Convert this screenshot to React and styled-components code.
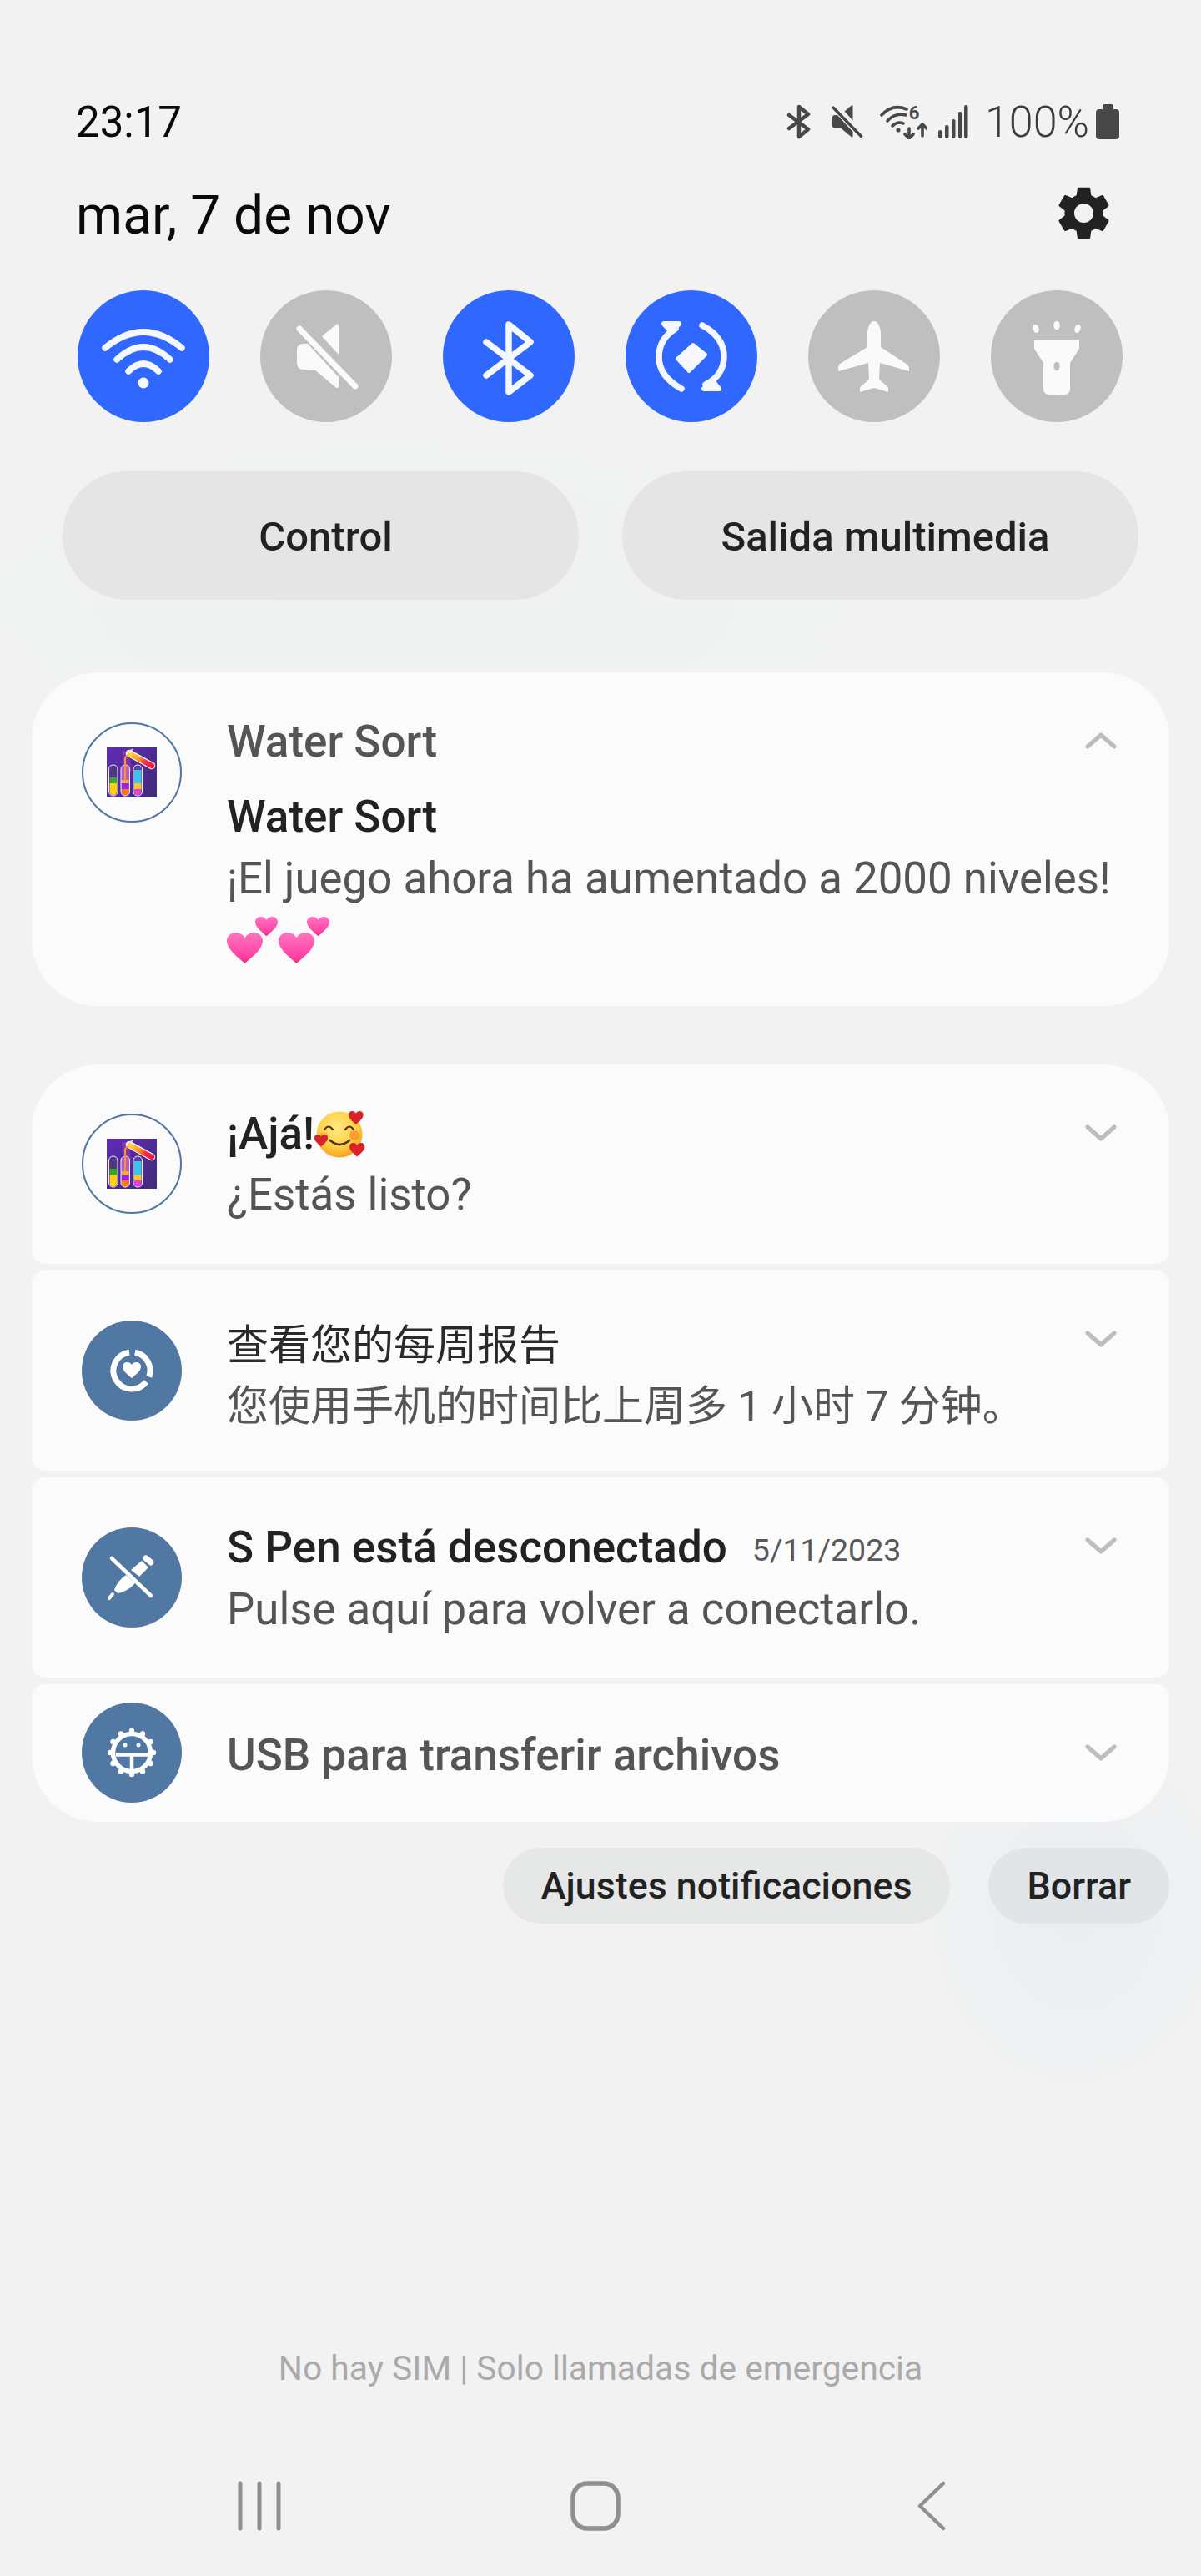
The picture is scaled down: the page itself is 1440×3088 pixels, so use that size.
import React from 'react';
import styled, { createGlobalStyle } from 'styled-components';

const Global = createGlobalStyle`
  html, body { margin: 0; padding: 0; }
  body {
    background: #f2f2f2;
    font-family: Roboto, "Noto Sans CJK SC", sans-serif;
  }
`;

const Page = styled.div`
  width: 1440px;
  height: 3088px;
  overflow: hidden;
  background:
    radial-gradient(ellipse 200px 240px at 1290px 2290px, #e9eef2 0%, rgba(233,238,242,0) 100%),
    radial-gradient(ellipse 800px 300px at 500px 720px, #eff1f1 0%, rgba(239,241,241,0) 100%),
    #f2f2f2;
  display: flex;
  flex-direction: column;
`;

const StatusBar = styled.div`
  margin-top: 116px;
  height: 60px;
  padding: 0 98px 0 91px;
  display: flex;
  align-items: center;
  justify-content: space-between;
`;
const Clock = styled.span`
  font-size: 51px;
  color: #0a0a0a;
`;
const StatusIcons = styled.div`
  display: flex;
  align-items: center;
  color: #484848;
`;
const StatusIcon = styled.svg`
  display: block;
  margin-left: ${p => p.$gap}px;
  flex: none;
`;
const WifiStatus = styled(StatusIcon)`
  margin-bottom: 4px;
`;
const Percent = styled.span`
  font-size: 52px;
  font-weight: 300;
  color: #3c3c3c;
  margin-left: 20px;
  margin-right: 8px;
`;

const DateRow = styled.div`
  margin-top: 42px;
  height: 80px;
  padding: 0 102px 0 91px;
  display: flex;
  align-items: center;
  justify-content: space-between;
`;
const DateText = styled.span`
  font-size: 64px;
  color: #0a0a0a;
`;
const Gear = styled.svg`
  display: block;
  margin-top: -6px;
`;

const QuickRow = styled.div`
  margin-top: 50px;
  padding-left: 93px;
  display: flex;
  gap: 61px;
`;
const Quick = styled.div`
  width: 158px;
  height: 158px;
  border-radius: 50%;
  background: ${p => (p.$on ? '#3067ff' : '#bfbfbf')};
  color: ${p => (p.$on ? '#f6f8ff' : '#fafafa')};
  flex: none;
  svg { display: block; }
`;

const PillRow = styled.div`
  margin-top: 59px;
  padding: 0 75px;
  display: flex;
  gap: 52px;
`;
const Pill = styled.div`
  flex: 1;
  height: 154px;
  padding: 2px 0 0 12px;
  box-sizing: border-box;
  border-radius: 77px;
  background: #e5e5e5;
  display: flex;
  align-items: center;
  justify-content: center;
  font-size: 49px;
  font-weight: 500;
  color: #222;
`;

const Card = styled.div`
  margin: 87px 38px 0;
  height: 400px;
  border-radius: 80px;
  background: #fbfbfb;
  position: relative;
  display: flex;
  padding-left: 60px;
  gap: 54px;
  box-sizing: border-box;
`;
const Group = styled.div`
  margin: 70px 38px 0;
  display: flex;
  flex-direction: column;
  gap: 8px;
`;
const Row = styled.div`
  position: relative;
  height: ${p => p.$height}px;
  background: #fbfbfb;
  border-radius: ${p => p.$radius};
  display: flex;
  padding-left: 60px;
  gap: 54px;
  box-sizing: border-box;
`;
const AppRing = styled.div`
  width: 120px;
  height: 120px;
  margin-top: ${p => p.$top}px;
  border: 2px solid #4f76a5;
  border-radius: 50%;
  box-sizing: border-box;
  flex: none;
  display: flex;
  align-items: center;
  justify-content: center;
`;
const SysIcon = styled.div`
  width: 120px;
  height: 120px;
  margin-top: ${p => p.$top}px;
  border-radius: 50%;
  background: #5177a3;
  flex: none;
  svg { display: block; }
`;
const TextCol = styled.div`
  padding-top: ${p => p.$top}px;
  min-width: 0;
  flex: 1;
`;
const AppName = styled.div`
  font-size: 53px;
  line-height: 90px;
  font-weight: 500;
  color: #555;
`;
const Title = styled.div`
  font-size: 53px;
  line-height: ${p => p.$lh || 73}px;
  font-weight: 500;
  color: ${p => p.$muted ? '#555' : '#222'};
  display: flex;
  align-items: center;
  white-space: nowrap;
`;
const CjkTitle = styled.div`
  font-size: 50px;
  line-height: 73px;
  color: #2a2a2a;
  white-space: nowrap;
`;
const DateStamp = styled.span`
  font-size: 37.5px;
  font-weight: 400;
  color: #585858;
  margin-left: 30px;
  margin-top: 6px;
`;
const Body = styled.div`
  font-size: 52.8px;
  line-height: ${p => p.$lh || 69}px;
  color: #555;
  white-space: nowrap;
`;
const CjkBody = styled.div`
  font-size: 50px;
  line-height: 73px;
  color: #555;
  white-space: nowrap;
`;
const EmojiLine = styled.div`
  margin-top: 17px;
  svg { display: block; }
`;
const Chevron = styled.svg`
  position: absolute;
  top: 72px;
  right: 63px;
`;

const Actions = styled.div`
  margin-top: 31px;
  padding-right: 38px;
  display: flex;
  justify-content: flex-end;
  gap: 46px;
`;
const ActionBtn = styled.div`
  height: 91px;
  padding: 0 46px;
  border-radius: 46px;
  background: ${p => p.$tint};
  display: flex;
  align-items: center;
  font-size: 44.8px;
  font-weight: 500;
  color: #222;
`;
const SimNote = styled.div`
  margin-top: 503px;
  height: 60px;
  line-height: 60px;
  text-align: center;
  font-size: 40.8px;
  color: #aaa;
`;
const Nav = styled.div`
  margin-top: 105px;
  padding-left: 285px;
  display: grid;
  grid-template-columns: 399px 416px 34px;
  color: #8f8f8f;
  svg { display: block; }
`;

const WaterSortIcon = () => (
  <svg width="60" height="60" viewBox="0 0 60 60">
    <defs>
      <linearGradient id="wsBg" x1="0" y1="0" x2="1" y2="1">
        <stop offset="0" stopColor="#5f2bb4" />
        <stop offset="1" stopColor="#3f2c78" />
      </linearGradient>
      <linearGradient id="wsTilt" gradientUnits="userSpaceOnUse" x1="28" y1="8" x2="54" y2="22">
        <stop offset="0" stopColor="#ffd24a" />
        <stop offset="0.4" stopColor="#ff9a26" />
        <stop offset="0.7" stopColor="#f42c4c" />
        <stop offset="1" stopColor="#ee1c3c" />
      </linearGradient>
    </defs>
    <rect width="60" height="60" fill="url(#wsBg)" />
    <path d="M22 4 L26 30" stroke="#ff48c8" strokeWidth="8" opacity="0.3" fill="none" />
    <rect x="2.5" y="21" width="10.5" height="37" rx="5" fill="#4b3a80" />
    <rect x="17" y="21" width="10.5" height="37" rx="5" fill="#b85ac8" />
    <rect x="32" y="21" width="10.5" height="37" rx="5" fill="#5a3fa4" />
    <path d="M3.5 36 H12 V43 H3.5Z" fill="#35a827" />
    <path d="M3.5 43 H12 V53 a4.2 4.2 0 0 1 -8.5 0Z" fill="#ffd010" />
    <path d="M18 39 H26.5 V43 H18Z" fill="#f5b22c" />
    <path d="M18 43 H26.5 V50 H18Z" fill="#a020e8" />
    <path d="M18 50 H26.5 V53 a4.2 4.2 0 0 1 -8.5 0Z" fill="#fb7a08" />
    <path d="M33 27 H41.5 V43 H33Z" fill="#3cc3f0" />
    <path d="M33 43 H41.5 V50 H33Z" fill="#ffc81e" />
    <path d="M33 50 H41.5 V53 a4.2 4.2 0 0 1 -8.5 0Z" fill="#e63ed6" />
    <rect x="2.5" y="21" width="10.5" height="37" rx="5" fill="none" stroke="#f4ecfb" strokeWidth="1" />
    <rect x="17" y="21" width="10.5" height="37" rx="5" fill="none" stroke="#f4ecfb" strokeWidth="1" />
    <rect x="32" y="21" width="10.5" height="37" rx="5" fill="none" stroke="#f4ecfb" strokeWidth="1" />
    <path d="M22 12 V40" stroke="#f79a12" strokeWidth="2" fill="none" />
    <path d="M27 7 L54 22" stroke="#fff" strokeWidth="8.5" strokeLinecap="round" />
    <path d="M28 8 L54 22" stroke="url(#wsTilt)" strokeWidth="6.5" strokeLinecap="round" />
    <path d="M25 5 L32 2" stroke="#e8dcff" strokeWidth="1.5" />
    <path d="M22 12 L26 9" stroke="#f79a12" strokeWidth="2" />
  </svg>
);

const TwoHearts = () => {
  const big = 'M21.5 37 C10 27 0 19 0 10 C0 4 5 0 11 0 C15 0 19 2 21.5 6 C24 2 28 0 32 0 C38 0 43 4 43 10 C43 19 33 27 21.5 37Z';
  return (
    <>
      <path d={big} transform="translate(0 19)" fill="url(#heartA)" />
      <path d={big} transform="translate(34 0) scale(0.63)" fill="url(#heartA)" />
    </>
  );
};
const Hearts = () => (
  <svg width="124" height="58" viewBox="0 0 124 58">
    <defs>
      <linearGradient id="heartA" x1="0" y1="0" x2="0" y2="1">
        <stop offset="0" stopColor="#ff74c0" />
        <stop offset="0.75" stopColor="#ff44a6" />
        <stop offset="1" stopColor="#e92c7f" />
      </linearGradient>
    </defs>
    <TwoHearts />
    <g transform="translate(62 0)"><TwoHearts /></g>
  </svg>
);

const SmileEmoji = () => {
  const h = 'M10 18 C3 12 0 9 0 5 C0 2 2 0 5 0 C7 0 9 1 10 3 C11 1 13 0 15 0 C18 0 20 2 20 5 C20 9 17 12 10 18Z';
  return (
    <svg width="62" height="58" viewBox="0 0 62 58">
      <defs>
        <radialGradient id="smile" cx="0.45" cy="0.35" r="0.7">
          <stop offset="0" stopColor="#ffe884" />
          <stop offset="0.6" stopColor="#fdd045" />
          <stop offset="1" stopColor="#f39a1a" />
        </radialGradient>
      </defs>
      <circle cx="30" cy="29" r="27.5" fill="url(#smile)" />
      <circle cx="48" cy="30" r="6" fill="#fb8a2e" opacity="0.7" />
      <circle cx="11" cy="31" r="5" fill="#fb8a2e" opacity="0.5" />
      <path d="M12 23 Q17 16 22 23 M37 23 Q42 16 47 23" fill="none" stroke="#5a3210" strokeWidth="2.2" strokeLinecap="round" />
      <path d="M19 36 Q30 46 42 36" fill="none" stroke="#5a3210" strokeWidth="2.6" strokeLinecap="round" />
      <path d={h} transform="translate(41 1) scale(0.88)" fill="#d8232a" />
      <path d={h} transform="translate(0 29) scale(0.8)" fill="#d8232a" />
      <path d={h} transform="translate(42 39) scale(0.92)" fill="#d8232a" />
    </svg>
  );
};

const ChevronIcon = ({ up }) => (
  <Chevron width="38" height="20" viewBox="0 0 38 20">
    <path
      d={up ? 'M3 17 L19 3 L35 17' : 'M3 3 L19 17 L35 3'}
      fill="none"
      stroke="#bdbdbd"
      strokeWidth="5"
      strokeLinecap="round"
      strokeLinejoin="round"
    />
  </Chevron>
);

const MutePaths = () => (
  <g fill="currentColor">
    <path d="M94 43 V77 L74 55 L91 41 Q94 39 94 43Z" />
    <path d="M52 64 H57 L94 104 V114 Q94 119 90 116 L65 95 H52 Q44 95 44 87 V72 Q44 64 52 64Z" />
    <path d="M47 46 L114 115" stroke="currentColor" strokeWidth="7" strokeLinecap="round" fill="none" />
  </g>
);

const QuickWifi = () => (
  <svg width="158" height="158" viewBox="0 0 158 158" fill="none" stroke="currentColor" strokeWidth="7.5" strokeLinecap="round">
    <path d="M33 69 Q79 31 125 69" />
    <path d="M47 83 Q79 53 111 83" />
    <path d="M61 97 Q79 79 97 97" />
    <circle cx="79" cy="111" r="6.5" fill="currentColor" stroke="none" />
  </svg>
);
const QuickMute = () => (
  <svg width="158" height="158" viewBox="0 0 158 158"><MutePaths /></svg>
);
const QuickBluetooth = () => (
  <svg width="158" height="158" viewBox="0 0 158 158" fill="none" stroke="currentColor" strokeWidth="7.5" strokeLinecap="round" strokeLinejoin="round">
    <path d="M52 62 L105 102 L79 122 V41 L105 62 L52 102" />
  </svg>
);
const QuickSync = () => (
  <svg width="158" height="158" viewBox="0 0 158 158" fill="none" stroke="currentColor" strokeLinecap="round" strokeLinejoin="round">
    <path d="M60 46 Q40 58 40 80 Q40 103 67 118" strokeWidth="7.5" />
    <path d="M92 42 Q118 56 118 79 Q118 102 96 113" strokeWidth="7.5" />
    <path d="M46 40 H64 L55 50 Z" fill="currentColor" strokeWidth="6" />
    <path d="M94 118 H112 L104 108 Z" fill="currentColor" strokeWidth="6" />
    <path d="M81 65 L96 77 L76 97 L62 82 Z" fill="currentColor" strokeWidth="4" />
  </svg>
);
const QuickPlane = () => (
  <svg width="158" height="158" viewBox="0 0 158 158">
    <path
      fill="currentColor"
      d="M79 37 C84 37 87 45 87 52 V68 L119 89 Q121 91 121 93 V97 L86 87 L85 107 L96 116 V122 L79 117 L62 122 V116 L73 107 L72 87 L36 97 V93 Q36 90 38 88 L71 68 V52 C71 45 74 37 79 37Z"
    />
  </svg>
);
const QuickTorch = () => (
  <svg width="158" height="158" viewBox="0 0 158 158">
    <g fill="currentColor">
      <ellipse cx="79" cy="42" rx="3.8" ry="5.2" />
      <ellipse cx="54" cy="46" rx="3.6" ry="5.2" transform="rotate(-18 54 46)" />
      <ellipse cx="104" cy="46" rx="3.6" ry="5.2" transform="rotate(18 104 46)" />
      <path d="M54 59 H104 Q106 59 106 61 V70 L95 87 V118 Q95 125 88 125 H70 Q63 125 63 118 V87 L52 70 V61 Q52 59 54 59Z" />
    </g>
    <ellipse cx="79" cy="91" rx="3.6" ry="5.2" fill="#bfbfbf" />
  </svg>
);

const WeeklyIcon = () => (
  <svg width="120" height="120" viewBox="0 0 120 120" fill="none">
    <path d="M63.8 38.3 A22 22 0 0 1 80.7 67.5" stroke="#fff" strokeWidth="7" />
    <path d="M77.3 73.5 A22 22 0 1 1 57 38.2" stroke="#fff" strokeWidth="7" />
    <path fill="#fff" d="M60 69 C53 63 49 60 49 55 C49 52 51.5 50 54.5 50 C56.8 50 58.8 51 60 53 C61.2 51 63.2 50 65.5 50 C68.5 50 71 52 71 55 C71 60 67 63 60 69Z" />
  </svg>
);
const SPenIcon = () => (
  <svg width="120" height="120" viewBox="0 0 120 120" fill="none">
    <path d="M36 37 L83 82" stroke="#fff" strokeWidth="4.5" strokeLinecap="round" />
    <path d="M77 37 L83 42" stroke="#fff" strokeWidth="7" strokeLinecap="round" />
    <path d="M72 40 L80 48 L69 59 L59 51Z" fill="#fff" />
    <path d="M53 57 Q42 65 39 75 L43 79 Q55 77 64 67Z" fill="#fff" />
    <path d="M33 85 L37 80" stroke="#fff" strokeWidth="4" strokeLinecap="round" />
  </svg>
);
const UsbIcon = () => {
  const teeth = Array.from({ length: 12 }, (_, i) => {
    const a = (i * 30 * Math.PI) / 180;
    return { x: 60 + 26 * Math.sin(a), y: 60 - 26 * Math.cos(a) };
  });
  return (
    <svg width="120" height="120" viewBox="0 0 120 120" fill="none">
      <circle cx="60" cy="60" r="22.5" stroke="#fff" strokeWidth="5.5" />
      {teeth.map((t, i) => <circle key={i} cx={t.x} cy={t.y} r="3.2" fill="#fff" />)}
      <path d="M41 62.5 H79 M60 62.5 V81" stroke="#fff" strokeWidth="4.5" />
      <circle cx="52" cy="51" r="2.5" fill="#fff" />
      <circle cx="68" cy="51" r="2.5" fill="#fff" />
    </svg>
  );
};

const Signal = () => (
  <StatusIcon $gap={13} width="37" height="40" viewBox="0 0 37 40" fill="currentColor">
    <rect x="1" y="30" width="4.5" height="10" rx="2.2" />
    <rect x="9" y="24" width="4.5" height="16" rx="2.2" />
    <rect x="17" y="17" width="4.5" height="23" rx="2.2" />
    <rect x="25" y="8" width="4.5" height="32" rx="2.2" />
    <rect x="32" y="0" width="4.5" height="40" rx="2.2" />
  </StatusIcon>
);

export default function App() {
  return (
    <Page>
      <Global />
      <StatusBar>
        <Clock>23:17</Clock>
        <StatusIcons>
          <StatusIcon $gap={0} width="30" height="42" viewBox="0 0 30 42" fill="none" stroke="currentColor" strokeWidth="4.5" strokeLinecap="round" strokeLinejoin="round">
            <path d="M3 13 L26 30 L15 39 V3 L26 12 L3 29" />
          </StatusIcon>
          <StatusIcon $gap={23} width="39" height="40" viewBox="42 40 76 80"><MutePaths /></StatusIcon>
          <WifiStatus $gap={20} width="56" height="46" viewBox="0 -4 56 46" fill="none" stroke="currentColor" strokeWidth="3.6" strokeLinecap="round" strokeLinejoin="round">
            <path d="M2 13 Q15 -1 32 6" />
            <path d="M9 20 Q18 10 31 13" />
            <path d="M15 26 Q21 20 28 23" />
            <circle cx="22" cy="31" r="2.6" fill="currentColor" stroke="none" />
            <path d="M35 29 V41 M30 36 L35 41 L40 36" />
            <path d="M51 38 V24 M46 29 L51 24 L56 29" />
            <text x="41" y="18" fontFamily="Roboto" fontWeight="700" fontSize="22" textAnchor="middle" fill="currentColor" stroke="none">6</text>
          </WifiStatus>
          <Signal />
          <Percent>100%</Percent>
          <StatusIcon $gap={0} width="28" height="42" viewBox="0 0 28 42" fill="currentColor">
            <path d="M8 2 Q8 0 10 0 H19 Q21 0 21 2 V6 H24 Q28 6 28 10 V38 Q28 42 24 42 H4 Q0 42 0 38 V10 Q0 6 4 6 H8Z" />
          </StatusIcon>
        </StatusIcons>
      </StatusBar>

      <DateRow>
        <DateText>mar, 7 de nov</DateText>
        <Gear width="77" height="77" viewBox="0 0 24 24" fill="#222">
          <path d="M19.14 12.94c.04-.3.06-.61.06-.94 0-.32-.02-.64-.07-.94l2.03-1.58c.18-.14.23-.41.12-.61l-1.92-3.32c-.12-.22-.37-.29-.59-.22l-2.39.96c-.5-.38-1.03-.7-1.62-.94l-.36-2.54c-.04-.24-.24-.41-.48-.41h-3.84c-.24 0-.43.17-.47.41l-.36 2.54c-.59.24-1.13.57-1.62.94l-2.39-.96c-.22-.08-.47 0-.59.22L2.74 8.87c-.12.21-.08.47.12.61l2.03 1.58c-.05.3-.09.63-.09.94s.02.64.07.94l-2.03 1.58c-.18.14-.23.41-.12.61l1.92 3.32c.12.22.37.29.59.22l2.39-.96c.5.38 1.03.7 1.62.94l.36 2.54c.05.24.24.41.48.41h3.84c.24 0 .44-.17.47-.41l.36-2.54c.59-.24 1.13-.56 1.62-.94l2.39.96c.22.08.47 0 .59-.22l1.92-3.32c.12-.22.07-.47-.12-.61l-2.01-1.58zM12 15.6c-1.98 0-3.6-1.62-3.6-3.6s1.62-3.6 3.6-3.6 3.6 1.62 3.6 3.6-1.62 3.6-3.6 3.6z" />
        </Gear>
      </DateRow>

      <QuickRow>
        <Quick $on><QuickWifi /></Quick>
        <Quick><QuickMute /></Quick>
        <Quick $on><QuickBluetooth /></Quick>
        <Quick $on><QuickSync /></Quick>
        <Quick><QuickPlane /></Quick>
        <Quick><QuickTorch /></Quick>
      </QuickRow>

      <PillRow>
        <Pill>Control</Pill>
        <Pill>Salida multimedia</Pill>
      </PillRow>

      <Card>
        <AppRing $top={60}><WaterSortIcon /></AppRing>
        <TextCol $top={38}>
          <AppName>Water Sort</AppName>
          <Title $lh={90}>Water Sort</Title>
          <Body $lh={58}>¡El juego ahora ha aumentado a 2000 niveles!</Body>
          <EmojiLine><Hearts /></EmojiLine>
        </TextCol>
        <ChevronIcon up />
      </Card>

      <Group>
        <Row $height={239} $radius="80px 80px 16px 16px">
          <AppRing $top={59}><WaterSortIcon /></AppRing>
          <TextCol $top={47}>
            <Title>¡Ajá!<SmileEmoji /></Title>
            <Body $lh={73}>¿Estás listo?</Body>
          </TextCol>
          <ChevronIcon />
        </Row>
        <Row $height={240} $radius="16px">
          <SysIcon $top={60}><WeeklyIcon /></SysIcon>
          <TextCol $top={54}>
            <CjkTitle>查看您的每周报告</CjkTitle>
            <CjkBody>您使用手机的时间比上周多 1 小时 7 分钟。</CjkBody>
          </TextCol>
          <ChevronIcon />
        </Row>
        <Row $height={240} $radius="16px">
          <SysIcon $top={60}><SPenIcon /></SysIcon>
          <TextCol $top={45}>
            <Title>S Pen está desconectado<DateStamp>5/11/2023</DateStamp></Title>
            <Body>Pulse aquí para volver a conectarlo.</Body>
          </TextCol>
          <ChevronIcon />
        </Row>
        <Row $height={165} $radius="16px 16px 80px 80px">
          <SysIcon $top={22}><UsbIcon /></SysIcon>
          <TextCol $top={49}>
            <Title $muted>USB para transferir archivos</Title>
          </TextCol>
          <ChevronIcon />
        </Row>
      </Group>

      <Actions>
        <ActionBtn $tint="#e6e7e7">Ajustes notificaciones</ActionBtn>
        <ActionBtn $tint="#e1e5e8">Borrar</ActionBtn>
      </Actions>

      <SimNote>No hay SIM | Solo llamadas de emergencia</SimNote>

      <Nav>
        <svg width="52" height="60" viewBox="0 0 52 60" fill="none" stroke="currentColor" strokeWidth="5" strokeLinecap="round">
          <path d="M3 3 V57 M26 3 V57 M49 3 V57" />
        </svg>
        <svg width="60" height="60" viewBox="0 0 60 60" fill="none" stroke="currentColor" strokeWidth="5.5">
          <rect x="3" y="3" width="54" height="54" rx="17" />
        </svg>
        <svg width="34" height="60" viewBox="0 0 34 60" fill="none" stroke="currentColor" strokeWidth="4.5" strokeLinecap="round" strokeLinejoin="round">
          <path d="M31 3 L3 30 L31 57" />
        </svg>
      </Nav>
    </Page>
  );
}
